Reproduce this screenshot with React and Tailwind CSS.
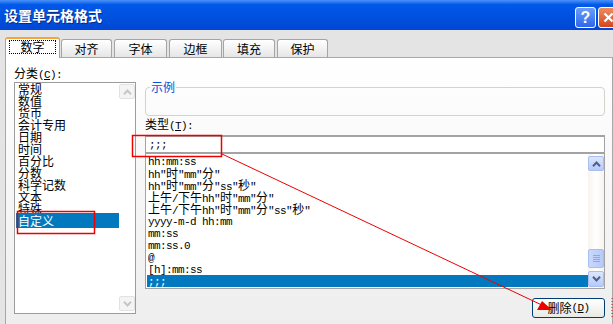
import React from 'react';

const HAN = /[\u3000-\u9fff\uff00-\uffef]/;

// split a string into CJK / latin runs so each gets its own font
function Mixed({ text }) {
	const parts = text.split(/([\u3000-\u9fff\uff00-\uffef]+)/);
	return parts.map((s, i) => {
		if (!s) return null;
		if (HAN.test(s))
			return (
				<span key={i} className="font-['Noto_Sans_CJK_SC',sans-serif] text-[12px] leading-[12px]">
					{s}
				</span>
			);
		return (
			<span
				key={i}
				className="font-['Liberation_Mono',monospace] text-[11px] leading-[12px] tracking-[-0.6px] whitespace-pre"
			>
				{s}
			</span>
		);
	});
}

const Latin = ({ children }) => (
	<span className="font-['Liberation_Mono',monospace] text-[11px] leading-[12px] tracking-[-0.6px]">{children}</span>
);
const Han = ({ children, className = '' }) => (
	<span className={"font-['Noto_Sans_CJK_SC',sans-serif] text-[12px] leading-[12px] " + className}>{children}</span>
);

const Chevron = ({ up, color }) => (
	<svg width="9" height="6" viewBox="0 0 9 6">
		<path d={up ? 'M1 5.2 L4.5 1.5 L8 5.2' : 'M1 0.8 L4.5 4.5 L8 0.8'} fill="none" stroke={color} strokeWidth="2" />
	</svg>
);

const ScrollBtn = ({ up, disabled, className }) => (
	<div
		className={
			disabled
				? 'flex items-center justify-center rounded-[2px] border border-[#e2e2e2] bg-[#f4f4f4] ' + className
				: 'flex items-center justify-center rounded-[2px] border border-[#aabdf0] bg-linear-to-b from-[#dce6fd] to-[#b6cafa] ' + className
		}
	>
		<Chevron up={up} color={disabled ? '#c6c6c6' : '#4d6185'} />
	</div>
);

const categories = ['常规', '数值', '货币', '会计专用', '日期', '时间', '百分比', '分数', '科学记数', '文本', '特殊', '自定义'];

const formats = [
	'hh:mm:ss',
	'hh"时"mm"分"',
	'hh"时"mm"分"ss"秒"',
	'上午/下午hh"时"mm"分"',
	'上午/下午hh"时"mm"分"ss"秒"',
	'yyyy-m-d hh:mm',
	'mm:ss',
	'mm:ss.0',
	'@',
	'[h]:mm:ss',
	';;;',
];

const tabs = [
	{ label: '对齐', cls: 'w-[51px] ml-[1px]' },
	{ label: '字体', cls: 'w-[53px] ml-[2px]' },
	{ label: '边框', cls: 'w-[53px] ml-[2px]' },
	{ label: '填充', cls: 'w-[52px] ml-[1px]' },
	{ label: '保护', cls: 'w-[51px] ml-[2px]' },
];

export default function App() {
	return (
		<div className="relative w-[613px] h-[324px] overflow-hidden bg-[#e4e4e4] flex flex-col select-none text-black text-[12px]">
			{/* title bar */}
			<div className="h-[30px] shrink-0 flex items-center pl-[4px] bg-linear-to-b from-[#4a92f9] via-[#0059e9] via-15% to-[#0047d4]">
				<span className="font-['Noto_Sans_CJK_SC',sans-serif] text-[14px] font-bold text-white leading-[16px] [text-shadow:1px_1px_0_#0b2a86]">
					设置单元格格式
				</span>
				<div className="ml-auto flex items-center gap-[2px] -mr-[6px] mt-[5px]">
					<div className="w-[21px] h-[21px] rounded-[3px] border border-white bg-linear-to-b from-[#6c9df9] to-[#2d66ea] flex items-center justify-center">
						<span className="font-['Liberation_Sans',sans-serif] text-[16px] font-bold text-white leading-none">?</span>
					</div>
					<div className="w-[21px] h-[21px] rounded-[3px] border border-white bg-linear-to-b from-[#f08a5e] to-[#d4441c] flex items-center justify-center">
						<svg width="11" height="11" viewBox="0 0 11 11">
							<path d="M1.5 1.5 L9.5 9.5 M9.5 1.5 L1.5 9.5" stroke="white" strokeWidth="2.2" />
						</svg>
					</div>
				</div>
			</div>

			{/* tab strip */}
			<div className="h-[27px] shrink-0 flex items-end pl-[5px]">
				<div className="relative z-10 w-[55px] h-[21px] -mb-[1px] bg-white border-x border-[#a4a4a4] border-t-2 border-t-[#f3a43a] rounded-t-[3px] pt-[1px] pl-[3px]">
					<div className="w-[47px] h-[14px] border border-dotted border-black flex items-center justify-center leading-[12px]">
						<Han>数字</Han>
					</div>
				</div>
				{tabs.map((t) => (
					<div
						key={t.label}
						className={
							'h-[18px] border border-b-0 border-[#a4a4a4] rounded-t-[3px] bg-linear-to-b from-white to-[#e6e6e6] flex items-center justify-center leading-[12px] ' +
							t.cls
						}
					>
						<Han>{t.label}</Han>
					</div>
				))}
			</div>

			{/* tab page */}
			<div className="flex-1 ml-[5px] w-[608px] border-l border-t border-r border-[#a8a8a8] bg-linear-to-b from-white to-[#eeeeee] flex">
				{/* category column */}
				<div className="w-[130px] pl-[8px] pt-[9px] flex flex-col">
					<div className="h-[12px] leading-[12px] whitespace-nowrap">
						<Han>分类</Han>
						<Latin>
							(<span className="underline">C</span>):
						</Latin>
					</div>
					<div className="mt-[3px] h-[232px] w-[122px] border border-[#9c9c9c] bg-white flex">
						<div className="flex-1 pl-[1px] flex flex-col">
							{categories.map((c, i) =>
								i === categories.length - 1 ? (
									<div key={c} className="-mt-[2px] h-[15px] flex items-center pt-[1px] pl-[2px] bg-[#0279bf] text-white leading-[12px]">
										<Han>{c}</Han>
									</div>
								) : (
									<div key={c} className="h-[12px] leading-[12px] pl-[2px]">
										<Han>{c}</Han>
									</div>
								)
							)}
						</div>
						<div className="w-[16px] flex flex-col pt-[1px] pb-[2px]">
							<ScrollBtn up disabled className="h-[15px]" />
							<div className="flex-1" />
							<ScrollBtn disabled className="h-[15px]" />
						</div>
					</div>
				</div>

				{/* type column */}
				<div className="ml-[9px] w-[460px] flex flex-col">
					<fieldset className="mt-[23px] h-[35px] border border-[#d3d3cb] rounded-[4px] px-[4px]">
						<legend className="px-[1px] leading-[12px]">
							<Han className="text-[#0b4fd6]">示例</Han>
						</legend>
					</fieldset>
					<div className="mt-[2px] h-[12px] leading-[12px] whitespace-nowrap">
						<Han>类型</Han>
						<Latin>
							(<span className="underline">T</span>):
						</Latin>
					</div>
					<div className="mt-[5px] h-[19px] border border-[#a3a3a3] border-t-2 border-b-2 bg-white flex items-center px-[3px] leading-[12px]">
						<Latin>;;;</Latin>
					</div>
					<div className="h-[135px] border-x border-b border-[#a3a3a3] bg-white flex">
						<div className="flex-1 pl-[1px] pt-[1px] flex flex-col">
							{formats.map((f, i) => (
								<div
									key={f}
									className={
										i === formats.length - 1
											? 'h-[12px] leading-[12px] pl-[1px] whitespace-nowrap bg-[#0279bf] text-white'
											: 'h-[12px] leading-[12px] pl-[1px] whitespace-nowrap'
									}
								>
									<Mixed text={f} />
								</div>
							))}
						</div>
						<div className="w-[16px] flex flex-col pt-[2px] pb-[1px] bg-linear-to-r from-[#f6f4ec] via-white to-[#f6f4ec]">
							<ScrollBtn up className="h-[15px]" />
							<div className="flex-1" />
							<div className="h-[19px] rounded-[2px] border border-[#aabdf0] bg-linear-to-r from-[#c9d8fc] to-[#b6cafa] flex flex-col items-center justify-center gap-[1px]">
								<div className="w-[7px] h-[1px] bg-[#8da6e8]" />
								<div className="w-[7px] h-[1px] bg-[#8da6e8]" />
								<div className="w-[7px] h-[1px] bg-[#8da6e8]" />
								<div className="w-[7px] h-[1px] bg-[#8da6e8]" />
							</div>
							<ScrollBtn className="h-[16px] mt-[3px]" />
						</div>
					</div>
					<button
						type="button"
						className="mt-[9px] self-end w-[73px] h-[20px] rounded-[3px] border border-[#003c74] bg-linear-to-b from-white to-[#e9e9e4] flex items-center justify-center leading-[12px] whitespace-nowrap"
					>
						<Han>删除</Han>
						<Latin>
							(<span className="underline">D</span>)
						</Latin>
					</button>
				</div>
			</div>

			{/* red annotations drawn over the dialog */}
			<svg className="absolute inset-0 pointer-events-none z-20" width="613" height="324" viewBox="0 0 613 324">
				<rect x="17.5" y="211.5" width="77" height="22" fill="none" stroke="#ee0000" strokeWidth="1.5" />
				<rect x="132.5" y="135.5" width="89" height="21" fill="none" stroke="#ee0000" strokeWidth="1.5" />
				<line x1="222" y1="154" x2="546" y2="307" stroke="#ee0000" strokeWidth="1" />
				<polygon points="537,310 542,301 552,310" fill="#ee0000" />
				<line x1="612" y1="298" x2="612" y2="317" stroke="#ee0000" strokeWidth="1" strokeDasharray="1 2" />
			</svg>
		</div>
	);
}
